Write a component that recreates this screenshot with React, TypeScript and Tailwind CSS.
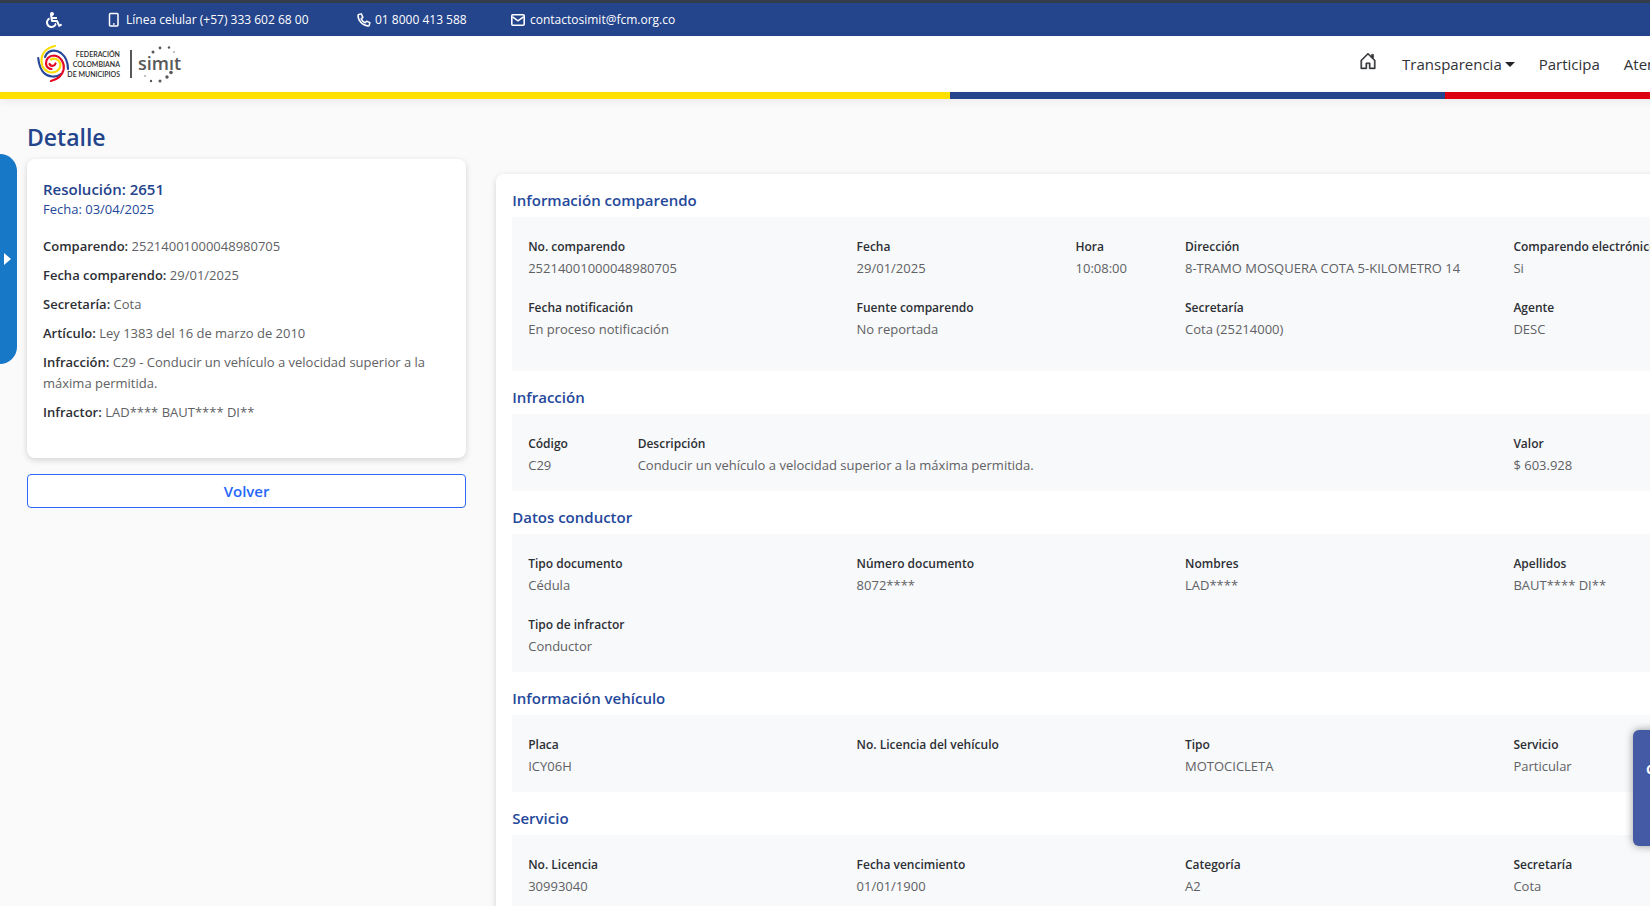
import { BsHouseDoor } from "react-icons/bs";
import { FaWheelchair } from "react-icons/fa";

type Field = { label: string; value: string; span: string };
type Section = { title: string; fields: Field[]; extra?: boolean };

const sections: Section[] = [
  {
    title: "Información comparendo",
    extra: true,
    fields: [
      { label: "No. comparendo", value: "25214001000048980705", span: "col-span-3" },
      { label: "Fecha", value: "29/01/2025", span: "col-span-2" },
      { label: "Hora", value: "10:08:00", span: "col-span-1" },
      { label: "Dirección", value: "8-TRAMO MOSQUERA COTA 5-KILOMETRO 14", span: "col-span-3" },
      { label: "Comparendo electrónico", value: "Si", span: "col-span-3" },
      { label: "Fecha notificación", value: "En proceso notificación", span: "col-span-3" },
      { label: "Fuente comparendo", value: "No reportada", span: "col-span-3" },
      { label: "Secretaría", value: "Cota (25214000)", span: "col-span-3" },
      { label: "Agente", value: "DESC", span: "col-span-3" },
    ],
  },
  {
    title: "Infracción",
    fields: [
      { label: "Código", value: "C29", span: "col-span-1" },
      {
        label: "Descripción",
        value: "Conducir un vehículo a velocidad superior a la máxima permitida.",
        span: "col-span-8",
      },
      { label: "Valor", value: "$ 603.928", span: "col-span-3" },
    ],
  },
  {
    title: "Datos conductor",
    fields: [
      { label: "Tipo documento", value: "Cédula", span: "col-span-3" },
      { label: "Número documento", value: "8072****", span: "col-span-3" },
      { label: "Nombres", value: "LAD****", span: "col-span-3" },
      { label: "Apellidos", value: "BAUT**** DI**", span: "col-span-3" },
      { label: "Tipo de infractor", value: "Conductor", span: "col-span-3" },
    ],
  },
  {
    title: "Información vehículo",
    fields: [
      { label: "Placa", value: "ICY06H", span: "col-span-3" },
      { label: "No. Licencia del vehículo", value: "", span: "col-span-3" },
      { label: "Tipo", value: "MOTOCICLETA", span: "col-span-3" },
      { label: "Servicio", value: "Particular", span: "col-span-3" },
    ],
  },
  {
    title: "Servicio",
    fields: [
      { label: "No. Licencia", value: "30993040", span: "col-span-3" },
      { label: "Fecha vencimiento", value: "01/01/1900", span: "col-span-3" },
      { label: "Categoría", value: "A2", span: "col-span-3" },
      { label: "Secretaría", value: "Cota", span: "col-span-3" },
    ],
  },
];

const summary = [
  ["Comparendo:", "25214001000048980705"],
  ["Fecha comparendo:", "29/01/2025"],
  ["Secretaría:", "Cota"],
  ["Artículo:", "Ley 1383 del 16 de marzo de 2010"],
  ["Infracción:", "C29 - Conducir un vehículo a velocidad superior a la máxima permitida."],
  ["Infractor:", "LAD**** BAUT**** DI**"],
];

function PhoneIcon() {
  return (
    <svg className="h-4 w-3" viewBox="0 0 12 16" fill="none" stroke="currentColor" strokeWidth="1.5" aria-hidden="true">
      <rect x="1.5" y="1.5" width="8.5" height="12.5" rx="1" />
      <path d="M5 12h1.6" />
    </svg>
  );
}

function HandsetIcon() {
  return (
    <svg className="size-[14px]" viewBox="0 0 24 24" fill="none" stroke="currentColor" strokeWidth="2.6" strokeLinejoin="round" aria-hidden="true">
      <path d="M3 2.5 7.5 1.5 10 7.5 7.2 10c1.4 3 3.6 5.2 6.8 6.800l2.500-2.800 5.500 2.500-1 4.500c-.2.8-.8 1.200-1.600 1.200C10.500 22.200 1.800 13.500 1.800 4.100 1.800 3.300 2.200 2.700 3 2.500Z" />
    </svg>
  );
}

function MailIcon() {
  return (
    <svg className="h-3 w-[14px]" viewBox="0 0 14 12" fill="none" stroke="currentColor" strokeWidth="1.6" aria-hidden="true">
      <rect x="0.8" y="0.8" width="12.4" height="10.4" rx="1" />
      <path d="M1.500 2.800 7 6.800l5.500-4" />
    </svg>
  );
}

function SwirlLogo() {
  return (
    <svg className="h-[38px] w-[33px]" viewBox="0 0 33 38" fill="none" strokeWidth="2.2" strokeLinecap="round" aria-hidden="true">
      <path d="M1.200 13C2 20 3 24 7 28c4 4 12 5 17 1" stroke="#27479a" />
      <path d="M31 24C31 17 29 12 24 8 18 3.500 10 5.500 8 12" stroke="#27479a" />
      <path d="M14 36c6-1.500 11-5 12.500-11 1.500-7-3-14-9.500-14.500-5 0-8.500 4-8 8.500.5 3 3 5 5.500 5" stroke="#e30922" />
      <path d="M18 1C9 3 4 9 4.500 17c.5 6 5 10.500 10.500 10.500 6 0 9.500-5 8-9.500-1.500-4-6-5.500-9-3.500" stroke="#fbdc06" />
      <path d="M12.500 19c1 2.500 5 2.500 6-.5" stroke="#e30922" />
    </svg>
  );
}

function SimitLogo() {
  return (
    <svg className="h-[38px] w-[46px]" viewBox="0 0 46 38" fill="#585858" role="img" aria-label="simit">
      <text x="0" y="25" fontFamily="'Open Sans', sans-serif" fontSize="18" fontWeight="600">simıt</text>
      <circle cx="15" cy="7" r="1.500" />
      <circle cx="22" cy="3" r="1.400" />
      <circle cx="31" cy="2.500" r="1.200" />
      <circle cx="36" cy="7" r="0.700" />
      <circle cx="33" cy="27.500" r="1.800" />
      <circle cx="29" cy="32" r="1.700" />
      <circle cx="22" cy="36" r="1.500" />
      <circle cx="13" cy="36" r="1.200" />
      <circle cx="7" cy="31" r="0.700" />
    </svg>
  );
}

function SectionBlock({ section }: { section: Section }) {
  return (
    <section className="pt-4">
      <h2 className="mb-[7px] text-[15px] leading-5 font-semibold text-[#24489a]">{section.title}</h2>
      <dl className={`grid grid-cols-12 bg-[#f8f9fb] px-4 pt-2 ${section.extra ? "pb-6" : "pb-2"}`}>
        {section.fields.map((f) => (
          <div key={f.label} className={`h-[61px] pt-[11px] whitespace-nowrap ${f.span}`}>
            <dt className="text-[12px] leading-[22px] font-semibold text-[#2c2f34]">{f.label}</dt>
            <dd className="text-[13px] leading-[21px] text-[#606164]">{f.value}</dd>
          </div>
        ))}
      </dl>
    </section>
  );
}

export default function App() {
  return (
    <div className="relative h-screen overflow-hidden bg-[#fafafa] font-['Open_Sans','Noto_Sans',sans-serif]">
      <div className="w-[115.2%]">
        <div className="flex h-9 items-center border-t-[3px] border-[#363d4a] bg-[#24448c] text-[12px] text-white">
          <a href="#accesibilidad" aria-label="Accesibilidad" className="ml-[46px] w-[62px]">
            <FaWheelchair className="size-4" />
          </a>
          <a href="tel:+573336026800" className="flex w-[249px] items-center gap-[6px]">
            <PhoneIcon />
            Línea celular (+57) 333 602 68 00
          </a>
          <a href="tel:018000413588" className="flex w-[154px] items-center gap-1">
            <HandsetIcon />
            01 8000 413 588
          </a>
          <a href="mailto:contactosimit@fcm.org.co" className="flex items-center gap-[5px]">
            <MailIcon />
            contactosimit@fcm.org.co
          </a>
        </div>

        <header className="shadow-[0_3px_8px_rgba(0,0,0,0.06)]">
          <div className="flex h-14 items-center bg-white">
            <a href="#inicio" className="ml-[37px] flex items-center">
              <SwirlLogo />
              <span className="-ml-1 w-[54px] text-right font-['Lato'] text-[7px] leading-[10px] font-semibold whitespace-nowrap text-[#2b2b2b]">
                <span className="block">FEDERACIÓN</span>
                <span className="block">COLOMBIANA</span>
                <span className="block">DE MUNICIPIOS</span>
              </span>
              <span className="mr-[6px] ml-[10px] h-7 w-[2px] bg-[#585858]" />
              <SimitLogo />
            </a>
            <nav className="ml-auto flex w-[28.5%] items-center text-[15px] whitespace-nowrap text-[#303236]">
              <a href="#home" aria-label="Inicio" className="mb-[6px] w-[43px]">
                <BsHouseDoor className="size-[18px] stroke-current stroke-[0.4]" />
              </a>
              <button type="button" className="mr-6 flex items-center gap-[3px]">
                Transparencia
                <span className="border-x-[5px] border-t-[5px] border-x-transparent border-t-[#212529]" />
              </button>
              <a href="#participa" className="mr-6">Participa</a>
              <a href="#atencion">Atención</a>
            </nav>
          </div>
          <div className="flex h-[7px]">
            <div className="w-1/2 bg-[#ffe000]" />
            <div className="w-[26%] bg-[#24448c]" />
            <div className="w-[24%] bg-[#dc0012]" />
          </div>
        </header>

        <main className="grid grid-cols-4 px-3 pt-[22px]">
          <div className="px-[15px]">
            <h1 className="text-[23px] leading-8 font-semibold text-[#24448c]">Detalle</h1>
            <div className="mt-[6px] rounded-lg bg-white px-4 pt-[19px] pb-[27px] shadow-[0_2px_6px_rgba(0,0,0,0.16)]">
              <h2 className="text-[15px] leading-[22px] font-semibold text-[#24448c]">Resolución: 2651</h2>
              <p className="mb-[18px] text-[13px] leading-[18px] text-[#24489a]">Fecha: 03/04/2025</p>
              {summary.map(([k, v]) => (
                <p key={k} className="mb-2 text-[13px] leading-[21px] text-[#606164]">
                  <strong className="font-semibold text-[#2c2f34]">{k}</strong> {v}
                </p>
              ))}
            </div>
            <button
              type="button"
              className="mt-4 h-[34px] w-full rounded-[4px] border border-[#2a68f5] bg-white text-[15px] font-semibold text-[#2568fb]"
            >
              Volver
            </button>
          </div>

          <div className="col-span-3 mt-[53px] px-[15px]">
            <div className="rounded-lg bg-white px-4 pb-8 shadow-[0_2px_6px_rgba(0,0,0,0.16)]">
              {sections.map((s) => (
                <SectionBlock key={s.title} section={s} />
              ))}
            </div>
          </div>
        </main>
      </div>

      <button
        type="button"
        aria-label="Abrir panel"
        className="absolute top-[154px] left-0 flex h-[210px] w-[17px] items-center rounded-r-[17px] bg-[#1878c8] pl-1"
      >
        <span className="border-y-[6px] border-l-[7px] border-y-transparent border-l-white" />
      </button>
      <button
        type="button"
        className="absolute top-[730px] -right-[99px] h-[116px] w-[116px] rounded-l-md bg-[#455aa5] pb-9 pl-[13px] text-left text-[13px] font-bold text-white shadow-[0_0_8px_rgba(0,0,0,0.4)]"
      >
        Contacto
      </button>
    </div>
  );
}
